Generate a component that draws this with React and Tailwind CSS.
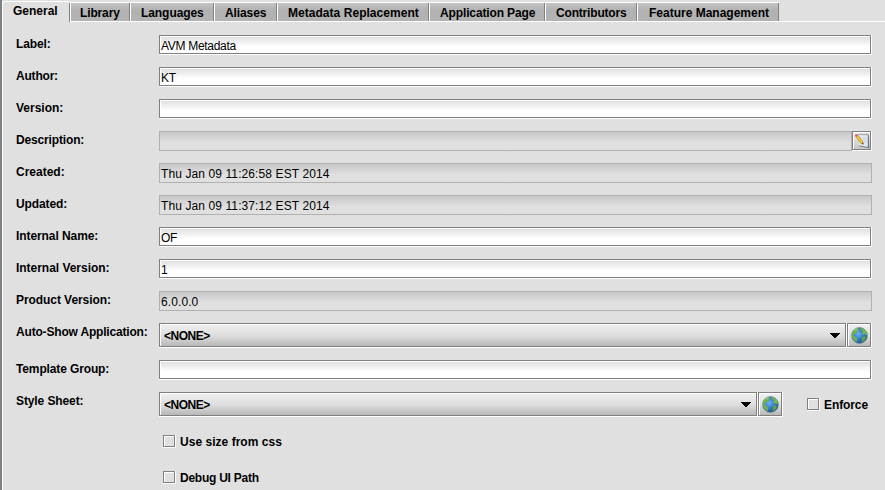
import React from 'react';

const tabs = [
  { label: 'Library', box: 'w-[60px]', text: 'pl-[9px] tracking-[-0.14px]' },
  { label: 'Languages', box: 'w-[84px]', text: 'pl-[10px] tracking-[-0.07px]' },
  { label: 'Aliases', box: 'w-[63px]', text: 'pl-[10px] tracking-[-0.1px]' },
  { label: 'Metadata Replacement', box: 'w-[152px]', text: 'pl-[10px] tracking-[0.04px]' },
  { label: 'Application Page', box: 'w-[116px]', text: 'pl-[10px] tracking-[-0.13px]' },
  { label: 'Contributors', box: 'w-[92px]', text: 'pl-[10px] tracking-[-0.18px]' },
  { label: 'Feature Management', box: 'w-[142px]', text: 'pl-[11px]' },
];

function Tab({ label, box, text }) {
  return (
    <div className={`h-[19px] shrink-0 border-l border-t border-white ${box}`}>
      <div className={`h-full whitespace-nowrap border-r border-[#808080] bg-gradient-to-b from-[#c4c4c4] to-[#b2b2b2] to-40% leading-[20px] ${text}`}>
        {label}
      </div>
    </div>
  );
}

function Bevel({ className, fill, children }) {
  return (
    <div className={`shrink-0 border-b border-r border-white ${className}`}>
      <div className="h-full border border-[#808080]">
        <div className={`flex h-full items-center border-l border-t border-white ${fill}`}>{children}</div>
      </div>
    </div>
  );
}

function Row({ label, track = '', className = 'h-8', children }) {
  return (
    <div className={`flex items-start ${className}`}>
      <div className={`w-[143px] shrink-0 whitespace-nowrap pt-[2px] leading-[14px] ${track}`}>{label}</div>
      {children}
    </div>
  );
}

function Field({ value, track = '' }) {
  return (
    <Bevel className="h-5 w-[713px]" fill="bg-gradient-to-b from-[#e0e0e0] to-white to-60%">
      <span className={`whitespace-nowrap pt-[2px] font-normal ${track}`}>{value}</span>
    </Bevel>
  );
}

function ReadOnly({ value, width = 'w-[713px]' }) {
  return (
    <div className={`h-5 shrink-0 border border-[#b0b0b0] bg-gradient-to-b from-[#c8c8c8] to-[#e0e0e0] to-60% pl-px pt-[2px] font-normal leading-[17px] tracking-[0.1px] ${width}`}>
      {value}
    </div>
  );
}

const buttonFill = 'bg-gradient-to-b from-[#eeeeee] via-[#dedede] to-[#b8b8b8]';

function Combo({ width }) {
  return (
    <Bevel className={`h-[25px] ${width}`} fill={buttonFill}>
      <span className="pb-px pl-[3px] pt-px tracking-[-0.5px]">&lt;NONE&gt;</span>
      <svg className="mb-px mr-[5px] ml-auto" width="10" height="5" viewBox="0 0 10 5" shapeRendering="crispEdges">
        <path d="M0 0h10v1H9v1H8v1H7v1H6v1H4V4H3V3H2V2H1V1H0z" fill="#000" />
      </svg>
    </Bevel>
  );
}

function GlobeButton() {
  return (
    <Bevel className="h-[25px] w-[25px]" fill={buttonFill}>
      <svg className="ml-[2px]" width="17" height="17" viewBox="0 0 17 17">
        <defs>
          <radialGradient id="sea" cx="0.42" cy="0.4" r="0.62">
            <stop offset="0" stopColor="#6db2f4" />
            <stop offset="0.55" stopColor="#3279c8" />
            <stop offset="1" stopColor="#1d568e" />
          </radialGradient>
        </defs>
        <circle cx="8.5" cy="8.5" r="7.9" fill="url(#sea)" stroke="#5d8186" strokeWidth="0.6" />
        <path d="M1 6 3 3 6 1 8 1.3 7 3 8 4 6 5 5 7 3 7 2.5 8.5 4.5 10 6.5 12 5.5 15 3 13.5 1 10z" fill="#6fb04f" />
        <path d="M9 1 12 1.4 15 4 16 7 15.5 9 14 7 12.5 8 11 6 12 4 10 3z" fill="#74b84d" />
        <path d="M11 10 14 9 15 11 13 14 10.5 15 11 13z" fill="#5fa345" />
        <path d="M3 3.2 5.5 1.5 7 1.7 5 3.5z" fill="#a9d184" />
      </svg>
    </Bevel>
  );
}

function NoteButton() {
  return (
    <Bevel className="h-5 w-5" fill="bg-gradient-to-b from-[#eeeeee] to-[#c6c6c6]">
      <svg width="16" height="16" viewBox="0 0 16 16">
        <path d="M4 2 14.8 1.5 15.3 15.3 5 13.3z" fill="#6b747f" />
        <path d="M4 1.5 13.8 1.5 13.8 14 4.5 12.3z" fill="#dfe9f2" />
        <path d="M5 2.2V.6M7 2.2V.6M9 2.2V.6M11 2.2V.6M13 2.2V.6" stroke="#68717b" strokeWidth="0.8" />
        <path d="M8 5h4M9 7h3.5M10 9h2.5" stroke="#b4cad8" strokeWidth="0.8" />
        <path d="M1.8 3.6 4 2.2 8.8 8.5 9.2 11.3 6.6 10.2z" fill="#f8c22c" stroke="#a87526" strokeWidth="0.6" />
        <path d="M.6 2.2 2.3.8 4.2 2.3 2 4z" fill="#e06465" />
        <path d="M7.9 10.3 9.1 9.6 9.3 11.6z" fill="#2d2820" />
      </svg>
    </Bevel>
  );
}

function Check({ label, className = '', track = '' }) {
  return (
    <label className={`flex h-[13px] items-center ${className}`}>
      <Bevel className="h-[13px] w-[13px]" fill="bg-[#e0e0e0]" />
      <span className={`whitespace-nowrap pl-[4px] ${track}`}>{label}</span>
    </label>
  );
}

export default function App() {
  return (
    <div className="flex h-[490px] w-[885px] overflow-hidden bg-[#e0e0e0] text-[12px] leading-[14px] font-bold text-black [font-family:'Liberation_Sans',Arial,sans-serif]">
      <div className="w-[2px] shrink-0 bg-[#808080]" />
      <div className="w-[883px]">
        <div className="flex h-[22px] items-stretch">
          <div className="w-[68px] shrink-0 pt-px">
            <div className="h-[21px] rounded-tl-[3px] border-l border-t border-white">
              <div className="mt-px h-[19px] border-r border-[#808080] pl-[10px] leading-[17px]">General</div>
            </div>
          </div>
          <div className="flex flex-1 items-end border-b border-white">
            {tabs.map((t) => <Tab key={t.label} {...t} />)}
          </div>
        </div>
        <div className="h-[468px] border-l border-white pt-[13px] pl-[13px]">
          <Row label="Label:" track="tracking-[-0.1px]"><Field value="AVM Metadata" track="tracking-[-0.3px]" /></Row>
          <Row label="Author:" track="tracking-[-0.2px]"><Field value="KT" track="tracking-[-0.3px]" /></Row>
          <Row label="Version:"><Field /></Row>
          <Row label="Description:" track="tracking-[-0.15px]"><ReadOnly width="w-[693px]" /><NoteButton /></Row>
          <Row label="Created:"><ReadOnly value="Thu Jan 09 11:26:58 EST 2014" /></Row>
          <Row label="Updated:" track="tracking-[-0.1px]"><ReadOnly value="Thu Jan 09 11:37:12 EST 2014" /></Row>
          <Row label="Internal Name:" track="tracking-[-0.08px]"><Field value="OF" track="tracking-[-0.4px]" /></Row>
          <Row label="Internal Version:" track="tracking-[-0.03px]"><Field value="1" /></Row>
          <Row label="Product Version:" track="tracking-[-0.07px]"><ReadOnly value="6.0.0.0" /></Row>
          <Row label="Auto-Show Application:" track="tracking-[-0.18px]" className="h-[37px]"><Combo width="w-[688px]" /><GlobeButton /></Row>
          <Row label="Template Group:" track="tracking-[-0.13px]"><Field /></Row>
          <Row label="Style Sheet:" track="tracking-[-0.1px]" className="h-[43px]">
            <Combo width="w-[599px]" /><GlobeButton />
            <Check label="Enforce" className="mt-[6px] ml-[24px]" track="tracking-[-0.1px]" />
          </Row>
          <div className="flex flex-col gap-[23px] pl-[147px]">
            <Check label="Use size from css" track="tracking-[0.03px]" />
            <Check label="Debug UI Path" track="tracking-[-0.25px]" />
          </div>
        </div>
      </div>
    </div>
  );
}
